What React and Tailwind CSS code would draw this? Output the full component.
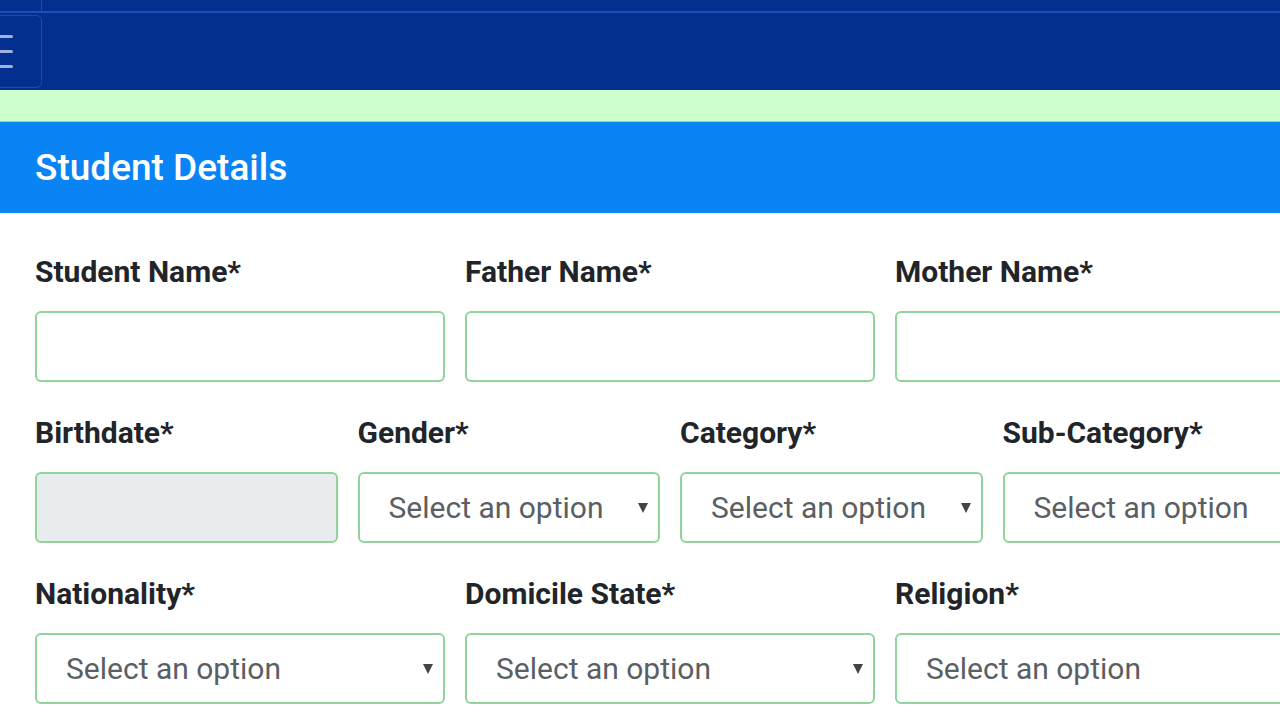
import React from 'react';

const font = { fontFamily: 'Roboto, "Noto Sans", sans-serif' };

const Caret = () => (
  <svg width="10" height="11" viewBox="0 0 10 11" className="shrink-0">
    <path d="M0 1 L10 1 L5 11 Z" fill="#444" />
  </svg>
);

const TextField = ({ label, disabled }) => (
  <div className="flex flex-col">
    <label className="text-[30px] leading-[36px] font-bold text-[#212529] mb-[21px] whitespace-nowrap">{label}</label>
    <div
      className={`h-[71px] rounded-[6px] border-2 border-[#8fd49a] ${disabled ? 'bg-[#e9ecef]' : 'bg-white'}`}
    />
  </div>
);

const SelectField = ({ label }) => (
  <div className="flex flex-col">
    <label className="text-[30px] leading-[36px] font-bold text-[#212529] mb-[21px] whitespace-nowrap">{label}</label>
    <div className="h-[71px] rounded-[6px] border-2 border-[#8fd49a] bg-white flex items-center justify-between pl-[29px] pr-[10px] overflow-hidden">
      <span className="text-[30px] text-[#5a5f63] whitespace-nowrap">Select an option</span>
      <Caret />
    </div>
  </div>
);

export default function App() {
  return (
    <div className="w-[1280px] h-[720px] overflow-hidden bg-white" style={font}>
      {/* Top navbar */}
      <header className="h-[90px] bg-[#03308f] flex flex-col">
        <div className="h-[13px] flex border-b-2 border-[#1b4fc0]">
          <div className="w-[42px] border-r border-[#1f4aa8]" />
        </div>
        <div className="flex-1 flex py-[2px]">
          <div className="w-[42px] h-full border border-l-0 border-[#1f4aa8] rounded-r-[6px] flex flex-col justify-center gap-[12px]">
            <span className="block w-[13px] h-[3px] bg-[#9fb2dd] rounded-r" />
            <span className="block w-[13px] h-[3px] bg-[#9fb2dd] rounded-r" />
            <span className="block w-[13px] h-[3px] bg-[#9fb2dd] rounded-r" />
          </div>
        </div>
      </header>

      {/* Alert strip */}
      <div className="h-[32px] bg-[#ccffcc] border-b border-[#a9c9b0]" />

      {/* Card header */}
      <div className="h-[91px] bg-[#0a84f5] flex items-center px-[35px]">
        <h2 className="text-[37px] font-medium text-white">Student Details</h2>
      </div>

      {/* Form */}
      <div className="w-[1400px] pl-[35px] pt-[41px] flex flex-col gap-[33px]">
        <div className="grid grid-cols-[410px_410px_410px] gap-x-[20px]">
          <TextField label="Student Name*" />
          <TextField label="Father Name*" />
          <TextField label="Mother Name*" />
        </div>
        <div className="grid grid-cols-[302.5px_302.5px_302.5px_302.5px] gap-x-[20px]">
          <TextField label="Birthdate*" disabled />
          <SelectField label="Gender*" />
          <SelectField label="Category*" />
          <SelectField label="Sub-Category*" />
        </div>
        <div className="grid grid-cols-[410px_410px_410px] gap-x-[20px]">
          <SelectField label="Nationality*" />
          <SelectField label="Domicile State*" />
          <SelectField label="Religion*" />
        </div>
      </div>
    </div>
  );
}
